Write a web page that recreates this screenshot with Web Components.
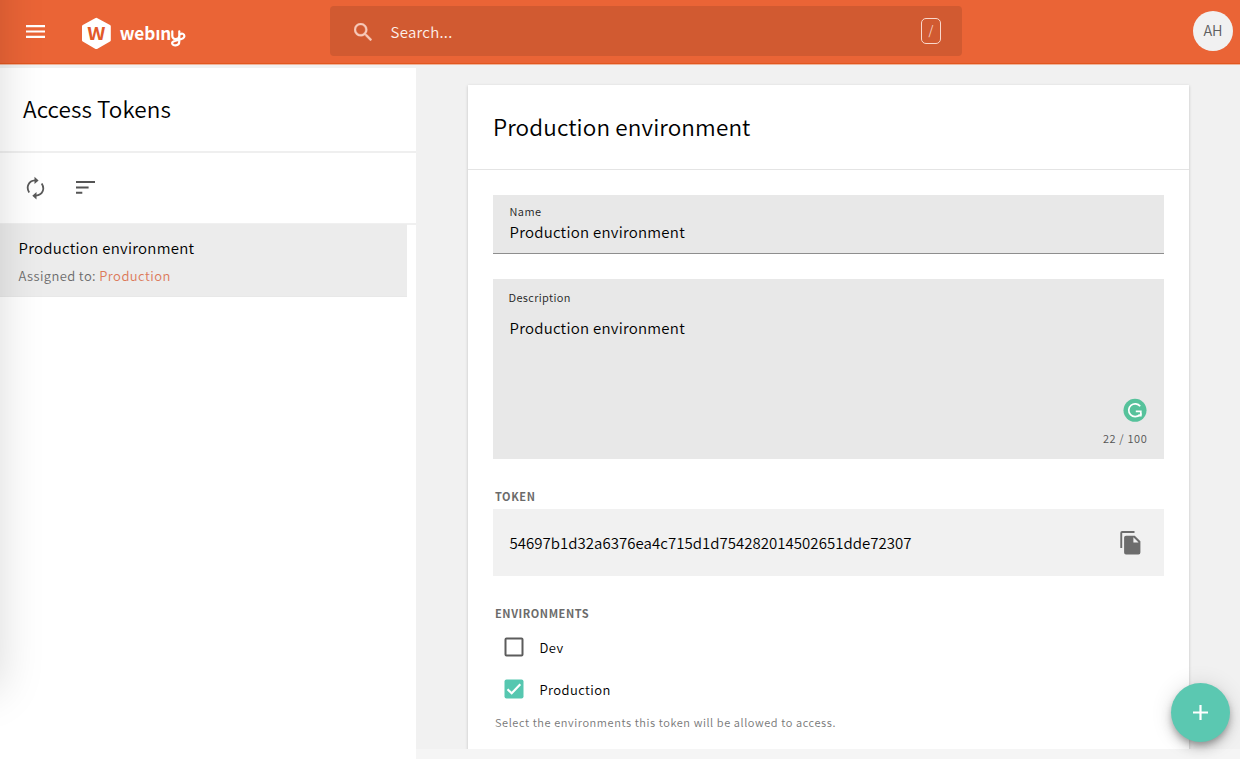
<!DOCTYPE html>
<html lang="en">
<head>
<meta charset="utf-8">
<title>Access Tokens</title>
<style>
html, body { margin: 0; height: 100%; overflow: hidden; }
body { font-family: "Noto Sans CJK SC", "Open Sans", sans-serif; font-weight: 350; color: #000; background: #f1f1f1; }
</style>
</head>
<body>
<admin-app>
  <top-bar slot="header"></top-bar>
  <side-panel slot="side" heading="Access Tokens">
    <list-item><span>Production environment</span><span slot="meta">Assigned to: </span><span slot="link">Production</span></list-item>
  </side-panel>
  <detail-card slot="main" heading="Production environment">
    <text-field label="Name">Production environment</text-field>
    <text-area label="Description" counter="22 / 100">Production environment</text-area>
    <token-field label="TOKEN">54697b1d32a6376ea4c715d1d754282014502651dde72307</token-field>
    <check-group label="ENVIRONMENTS" hint="Select the environments this token will be allowed to access.">
      <check-box>Dev</check-box>
      <check-box checked>Production</check-box>
    </check-group>
  </detail-card>
</admin-app>
<script>
function define(name, render) {
  customElements.define(name, class extends HTMLElement {
    constructor() {
      super();
      this.attachShadow({ mode: 'open' });
    }
    connectedCallback() {
      const t = document.createElement('template');
      t.innerHTML = render(n => this.getAttribute(n) || '', this);
      this.shadowRoot.replaceChildren(t.content.cloneNode(true));
    }
  });
}

define('admin-app', () => `
<style>
:host { display: grid; grid-template: 65px 694px / 416px 824px; width: 1240px; height: 759px; position: relative; overflow: hidden; }
header { grid-column: 1 / 3; }
aside { padding-top: 3px; display: flex; background: #f1f1f1; }
main { display: grid; grid-template-rows: 684px 10px; overflow: hidden; }
.scroll { padding: 20px 51px 0 52px; overflow: hidden; display: flex; }
footer { background: #f5f5f5; }
.edge { position: absolute; left: -100px; top: -60px; width: 100px; height: 750px; box-shadow: 0 0 45px rgba(0,0,0,.15); pointer-events: none; }
add-button { position: absolute; left: 1171px; top: 683px; }
::slotted([slot=side]) { flex: 1; }
::slotted([slot=main]) { flex: 1; }
</style>
<header><slot name="header"></slot></header>
<aside><slot name="side"></slot></aside>
<main><div class="scroll"><slot name="main"></slot></div><footer></footer></main>
<div class="edge"></div>
<add-button></add-button>`);

define('top-bar', () => `
<style>
:host { display: grid; grid-template-columns: 330px 632px 1fr; height: 65px; box-sizing: border-box; background: linear-gradient(#ea6436 0 63px, #e2571f 63px 64px, #eeb49c 64px); }
.left { display: flex; align-items: flex-start; padding: 16px 0 0 26px; }
.menu { margin-top: 9px; width: 19px; height: 13px; }
brand-logo { margin-left: 37px; }
.right { display: flex; justify-content: flex-end; padding: 11px 7px 0 0; }
.avatar { width: 40px; height: 40px; border-radius: 50%; background: #f1f1f1; color: #5f5f5f; font-size: 14.5px; line-height: 38px; text-align: center; }
</style>
<div class="left">
  <svg class="menu" viewBox="0 0 19 13" fill="#fff"><path d="M0 0h19v2.2H0zM0 5.4h19v2.2H0zM0 10.8h19v2.2H0z"/></svg>
  <brand-logo></brand-logo>
</div>
<search-box></search-box>
<div class="right"><div class="avatar">AH</div></div>`);

define('brand-logo', () => `
<style>:host { display: block; width: 106px; height: 34px; } svg { display: block; overflow: visible; } text { font-family: "Noto Sans CJK SC", sans-serif; font-weight: 700; }</style>
<svg width="106" height="34" viewBox="0 0 106 34">
  <path fill="#fff" stroke="#fff" stroke-width="3" stroke-linejoin="round" d="M14.3 3.2 27.3 10.2V24.2L14.3 31.6 1.5 24.2V10.2z"/>
  <text x="5.2" y="24.300" font-size="16.500" fill="#e2592a" textLength="18.200" lengthAdjust="spacingAndGlyphs">W</text>
  <text x="37.7" y="24" font-size="18" fill="#fff" textLength="51.500" lengthAdjust="spacingAndGlyphs">webın</text>
  <path fill="none" stroke="#fff" stroke-width="2.200" stroke-linecap="round" stroke-linejoin="round" d="M90.300 15.300v4.700c0 4.300 6.800 3.800 7 0v-4.700V25.500c0 5-7.300 4.800-7.200 1.500 0-3.800 12.200-2 12.300-6.800 0-2.200-2.400-3.300-3.800-2"/>
</svg>`);

define('search-box', () => `
<style>
:host { display: flex; align-items: center; margin-top: 6px; height: 50px; box-sizing: border-box; padding: 0 21px 0 24px; border-radius: 4px; background: #d15a31; color: #fdf0eb; }
svg { width: 18px; height: 18px; margin-top: 2px; }
span { margin: 2px 0 0 18.500px; flex: 1; font-size: 15px; letter-spacing: .28px; line-height: 20px; }
kbd { box-sizing: border-box; width: 20px; height: 26px; border: 1.4px solid #f9d8cc; border-radius: 5px; font: 350 12.500px/21px "Noto Sans CJK SC", sans-serif; text-align: center; color: #f9d8cc; }
</style>
<svg viewBox="3 3 17.5 17.5" fill="#f7c9b9" stroke="#f7c9b9" stroke-width=".3"><path d="M15.500 14h-.79l-.28-.27A6.471 6.471 0 0 0 16 9.500 6.500 6.500 0 1 0 9.500 16c1.610 0 3.090-.59 4.230-1.570l.27.28v.79l5 4.990L20.490 19l-4.990-5zm-6 0C7.010 14 5 11.990 5 9.500S7.010 5 9.500 5 14 7.010 14 9.500 11.990 14 9.500 14z"/></svg>
<span>Search...</span><kbd>/</kbd>`);

define('side-panel', a => `
<style>
:host { display: block; background: #fff; }
h1 { margin: 0; height: 83px; border-bottom: 2px solid #efefef; font-size: 22.5px; font-weight: 350; line-height: 81px; letter-spacing: .08px; padding-left: 23px; }
nav { display: flex; align-items: center; height: 69px; border-bottom: 2px solid #f0f0f0; padding: 0 0 1px 26px; gap: 31px; }
nav + div { margin-top: -1px; }
</style>
<h1>${a('heading')}</h1>
<nav>
  <svg width="19" height="24" viewBox="0 0 19 24" fill="none" stroke="#5a5a5a" stroke-width="1.800"><path d="M3.200 16.500C-.2 11 2.500 4.800 9 4.400M15.700 7.500C19.200 13 16.500 19.200 10 19.600"/><path stroke="none" fill="#5a5a5a" d="M8.500.7 12.600 4.400 8.500 8zM10.500 16 6.300 19.700l4.200 3.700z"/></svg>
  <svg width="19" height="13" viewBox="0 0 19 13" fill="#555"><path d="M0 0h19v2H0zM0 5.400h12.600v2H0zM0 10.700h6.300v2H0z"/></svg>
</nav>
<div><slot></slot></div>`);

define('list-item', () => `
<style>
:host { display: block; width: 406.5px; height: 73px; box-sizing: border-box; background: #ececec; padding: 12px 0 0 18.500px; border-bottom: 1px solid #e8e8e8; }
.t { font-size: 15px; letter-spacing: .27px; line-height: 24px; }
.m { font-size: 13px; line-height: 20px; margin-top: 6px; letter-spacing: .39px; color: #6c6c6c; white-space: pre; }
.l { color: #dc7a5b; letter-spacing: .45px; }
</style>
<div class="t"><slot></slot></div>
<div class="m"><slot name="meta"></slot><span class="l"><slot name="link"></slot></span></div>`);

define('detail-card', a => `
<style>
:host { display: block; height: 700px; background: #fff; box-shadow: 0 1px 3px rgba(0,0,0,.2); }
h2 { margin: 0; height: 84px; line-height: 82px; border-bottom: 1px solid #e4e4e4; font-size: 22.500px; font-weight: 350; letter-spacing: .12px; padding-left: 25px; }
section { padding: 25px 25px 0; display: flex; flex-direction: column; }
</style>
<h2>${a('heading')}</h2>
<section><slot></slot></section>`);

define('text-field', a => `
<style>
:host { display: block; height: 59px; box-sizing: border-box; background: #e8e8e8; border-bottom: 1px solid #8e8e8e; padding: 8px 16.500px 0; }
label { display: block; font-size: 11px; line-height: 16px; letter-spacing: .45px; color: #222; }
div { font-size: 15px; line-height: 24px; letter-spacing: .25px; margin-top: 1px; }
</style>
<label>${a('label')}</label><div><slot></slot></div>`);

define('text-area', a => `
<style>
:host { display: flex; flex-direction: column; margin-top: 25px; height: 180px; box-sizing: border-box; background: #e8e8e8; padding: 10px 16.500px 12px; }
label { font-size: 11px; line-height: 16px; letter-spacing: .38px; color: #222; margin-left: -1px; }
.v { font-size: 15px; line-height: 24px; letter-spacing: .25px; margin-top: 11px; flex: 1; }
.f { display: flex; flex-direction: column; align-items: flex-end; gap: 7px; }
.c { font-size: 11px; line-height: 18px; letter-spacing: .65px; color: #555; }
svg { display: block; margin-right: 1px; }
</style>
<label>${a('label')}</label><div class="v"><slot></slot></div>
<div class="f">
<svg width="24" height="24" viewBox="0 0 24 24"><circle cx="12" cy="12.300" r="11.500" fill="#56c29b"/><path fill="none" stroke="#fff" stroke-width="1.700" d="M17.200 8.300A6.400 6.400 0 1 0 16.800 16.600M12.800 13.300h5v4"/><path fill="#fff" d="M18.600 18.600h-3.800l3.800-3.600z"/></svg>
<div class="c">${a('counter')}</div></div>`);

define('token-field', a => `
<style>
:host { display: block; margin-top: 27px; }
label { display: block; padding-left: 2px; font-size: 11px; font-weight: 700; line-height: 20px; letter-spacing: .58px; color: #6b6b6b; }
div { display: flex; align-items: center; justify-content: space-between; box-sizing: border-box; height: 67px; margin-top: 3px; padding: 0 23.500px 0 16.500px; background: #f1f1f1; font-size: 15px; letter-spacing: .03px; }
</style>
<label>${a('label')}</label>
<div><span><slot></slot></span>
<svg width="21" height="24" viewBox="0 0 21 24" fill="#6d6d6d"><path d="M14.500 0H2.200A1.900 1.900 0 0 0 .3 1.900V17h1.900V1.900h12.300z"/><path d="M6 4.700h8.800l5.600 5.600v11.200a1.900 1.900 0 0 1-1.900 1.900H6a1.900 1.900 0 0 1-1.900-1.900V6.600A1.900 1.900 0 0 1 6 4.700z"/><path fill="#f1f1f1" d="M13.400 6.200v5.200h5.200z"/></svg></div>`);

define('check-group', a => `
<style>
:host { display: block; margin-top: 27px; padding-left: 2px; }
label { display: block; font-size: 11px; font-weight: 700; line-height: 20px; letter-spacing: .57px; color: #6b6b6b; margin-bottom: 3px; }
p { margin: 2px 0 0; font-size: 11px; line-height: 20px; letter-spacing: .58px; color: #777; }
</style>
<label>${a('label')}</label><slot></slot><p>${a('hint')}</p>`);

define('check-box', (a, el) => `
<style>
:host { display: flex; align-items: center; height: 42px; padding-left: 9px; gap: 15.500px; font-size: 13px; letter-spacing: .42px; }
svg { display: block; }
</style>
${el.hasAttribute('checked')
  ? '<svg width="20" height="20" viewBox="0 0 20 20"><rect x=".5" y=".5" width="19" height="19" rx="2" fill="#56c7b0"/><path d="M3.500 10.200 7.700 14.300 16.300 5.300" fill="none" stroke="#fff" stroke-width="2.200"/></svg>'
  : '<svg width="20" height="20" viewBox="0 0 20 20"><rect x="1.500" y="1.500" width="17" height="17" rx="1" fill="#fff" stroke="#5c5c5c" stroke-width="2"/></svg>'}
<span><slot></slot></span>`);

define('add-button', () => `
<style>
:host { display: flex; align-items: center; justify-content: center; width: 59px; height: 59px; border-radius: 50%; background: #5bc8b1; box-shadow: 0 4px 6px -1px rgba(0,0,0,.26), 0 7px 12px rgba(0,0,0,.14), 0 1px 22px rgba(0,0,0,.12); }
</style>
<svg width="15" height="15" viewBox="0 0 15 15" stroke="#fff" stroke-width="2.200"><path d="M7.500 0v15M0 7.500h15"/></svg>`);
</script>
</body>
</html>
